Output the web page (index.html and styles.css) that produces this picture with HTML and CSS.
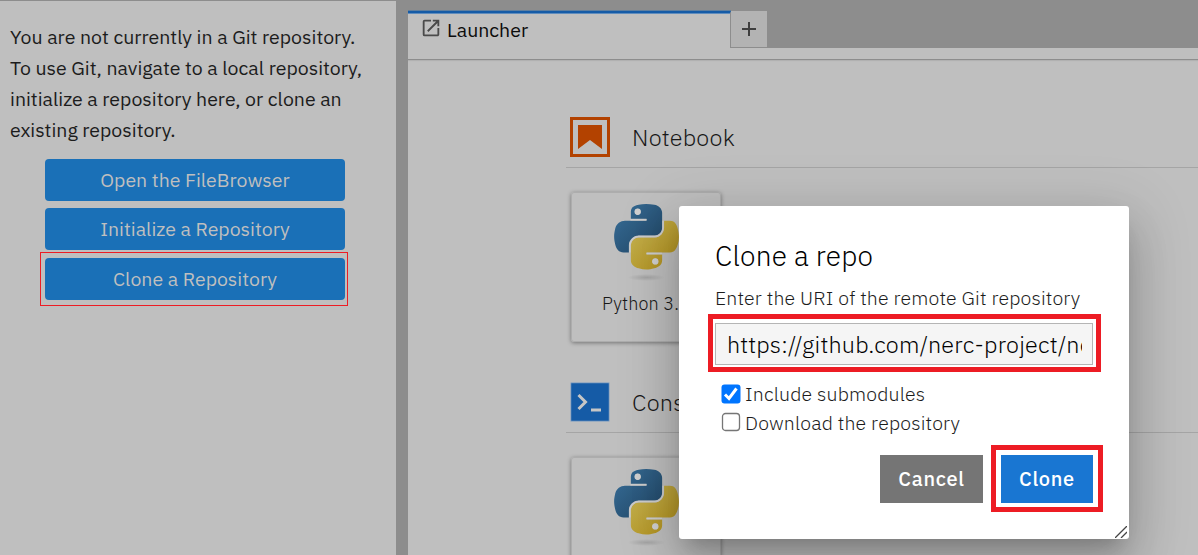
FILE: index.html
```html
<!DOCTYPE html>
<html lang="en">
<head>
<meta charset="utf-8">
<title>JupyterLab</title>
<link rel="stylesheet" href="styles.css">
</head>
<body>
<svg class="defs" width="0" height="0" aria-hidden="true">
  <defs>
    <linearGradient id="py-blue" x1="0" y1="0" x2="1" y2="1"><stop offset="0" stop-color="#386f9a"/><stop offset="1" stop-color="#204462"/></linearGradient>
    <linearGradient id="py-yellow" x1="0" y1="0" x2="1" y2="1"><stop offset="0" stop-color="#c6b556"/><stop offset="1" stop-color="#b08d17"/></linearGradient>
    <radialGradient id="py-shadow"><stop offset="0" stop-color="#000" stop-opacity=".14"/><stop offset="1" stop-color="#000" stop-opacity="0"/></radialGradient>
    <symbol id="python" viewBox="0 0 111 132">
      <ellipse cx="55" cy="126" rx="32" ry="6" fill="url(#py-shadow)"/>
      <path fill="url(#py-blue)" d="M54.9 0C50.300 0 46 .4 42.100 1.100 30.800 3.100 28.700 7.300 28.700 15v10.200h26.800v3.400H18.600c-7.800 0-14.600 4.700-16.700 13.600-2.500 10.200-2.600 16.600 0 27.200 1.900 7.900 6.500 13.600 14.200 13.600h9.200V70.800c0-8.800 7.700-16.700 16.800-16.700h26.800c7.400 0 13.400-6.100 13.400-13.600V15c0-7.300-6.100-12.700-13.400-13.900C64.300.3 59.500 0 54.900 0zM40.400 8.200c2.800 0 5 2.300 5 5.100 0 2.800-2.200 5.100-5 5.100-2.800 0-5-2.300-5-5.100 0-2.800 2.200-5.100 5-5.100z"/>
      <path fill="url(#py-yellow)" d="M85.600 28.700v11.900c0 9.200-7.800 17-16.800 17H42.100c-7.300 0-13.400 6.300-13.400 13.600v25.500c0 7.300 6.300 11.500 13.400 13.600 8.500 2.500 16.600 3 26.800 0 6.700-2 13.400-5.900 13.400-13.600V86.500H55.500v-3.400h40.200c7.800 0 10.700-5.400 13.400-13.600 2.800-8.400 2.700-16.500 0-27.200-1.900-7.800-5.600-13.600-13.400-13.600zM70.600 93.300c2.800 0 5 2.300 5 5.100 0 2.800-2.200 5.100-5 5.100-2.800 0-5-2.300-5-5.100 0-2.800 2.200-5.100 5-5.100z"/>
      <circle cx="40.400" cy="13.300" r="5.400" fill="#d0d0d0"/><circle cx="70.600" cy="98.400" r="5.400" fill="#d0d0d0"/>
      <path d="M28 27h27.500M55.500 84.800H82" stroke="#cdcdcd" stroke-width="2.600"/>
      <path fill="none" stroke="#cdcdcd" stroke-width="2.600" d="M84 28.700v11.900c0 8-6 15.300-15.200 15.300H42.100c-8 0-15.100 7-15.100 15.300V83"/>
    </symbol>
  </defs>
</svg>
<div class="app">
  <aside class="git-panel">
    <p class="warning"><span>You are not currently in a Git repository.</span><span>To use Git, navigate to a local repository,</span><span>initialize a repository here, or clone an</span><span>existing repository.</span></p>
    <button class="git-btn">Open the FileBrowser</button>
    <button class="git-btn">Initialize a Repository</button>
    <div class="outlined"><button class="git-btn">Clone a Repository</button></div>
  </aside>
  <main class="dock">
    <div class="tabbar">
      <div class="tab">
        <svg class="launch-icon" viewBox="0 0 24 24"><path fill="#4a4a4a" d="M19 19H5V5h7V3H5a2 2 0 0 0-2 2v14a2 2 0 0 0 2 2h14c1.100 0 2-.9 2-2v-7h-2v7zM14 3v2h3.590l-9.830 9.830 1.410 1.410L19 6.410V10h2V3h-7z"/></svg>
        <span class="tab-label">Launcher</span>
      </div>
      <div class="add"><svg width="14" height="14" viewBox="0 0 14 14"><path d="M7 0v14M0 7h14" stroke="#3f3f3f" stroke-width="2"/></svg></div>
    </div>
    <div class="toolbar"></div>
    <div class="launcher">
      <section>
        <header>
          <svg class="sec-icon" viewBox="0 0 40 40"><path fill="none" stroke="#b34200" stroke-width="3" d="M1.500 1.500h37v37h-37z"/><path fill="#b34200" d="M8 8h24v24l-12-9-12 9z"/></svg>
          <span class="sec-title">Notebook</span>
        </header>
        <div class="card"><svg class="python"><use href="#python"/></svg><span class="card-label">Python 3.</span></div>
      </section>
      <section class="clipped">
        <header>
          <svg class="sec-icon" viewBox="0 0 40 40"><path fill="#155ba6" stroke="#9fb2c8" stroke-width=".7" d="M.8.8h38.400v38.400H.8z"/><path fill="none" stroke="#c6c6c6" stroke-width="3" d="M8.500 13l7 7-7 7M21 28h10"/></svg>
          <span class="sec-title">Console</span>
        </header>
        <div class="card"><svg class="python"><use href="#python"/></svg></div>
      </section>
    </div>
  </main>
</div>
<div class="dialog">
  <h1>Clone a repo</h1>
  <label class="prompt">Enter the URI of the remote Git repository</label>
  <div class="mark mark-input"><div class="uri"><div class="uri-text">https://github.com/nerc-project/ne</div></div></div>
  <div class="check c1"><svg viewBox="0 0 20 20"><rect x=".5" y=".5" width="19" height="19" rx="3" fill="#0075ff"/><path d="M4 10.500l4 4 7.500-10" fill="none" stroke="#fff" stroke-width="3"/></svg><span>Include submodules</span></div>
  <div class="check c2"><svg viewBox="0 0 20 20"><rect x="1.500" y="1.500" width="17" height="17" rx="3" fill="#fff" stroke="#767676" stroke-width="1.300"/></svg><span>Download the repository</span></div>
  <div class="footer">
    <button class="btn cancel">Cancel</button>
    <div class="mark mark-btn"><button class="btn accept">Clone</button></div>
  </div>
  <svg class="grip" viewBox="0 0 12 12"><path d="M0 12L12 0M6 12l6-6" stroke="#444" stroke-width="1.300"/></svg>
</div>
</body>
</html>
```
FILE: styles.css
```css
* { box-sizing: border-box; }
body { margin: 0; width: 1198px; height: 555px; overflow: hidden; font-family: "IBM Plex Sans", Roboto, "Noto Sans", sans-serif; background: #8d8d8d; }
.defs { position: absolute; }
button { border: 0; font: inherit; padding: 0; }
.app { display: flex; height: 555px; padding-top: 1px; overflow: hidden; }
.git-panel { width: 396px; background: #bfbfbf; padding: 20px 0 0 10px; color: #1c1c1c; display: flex; flex-direction: column; }
.warning { margin: 0 0 14px; font-size: 19.5px; line-height: 31px; display: flex; flex-direction: column; align-items: flex-start; white-space: nowrap; }
.git-btn { display: block; width: 300px; height: 42px; margin: 0 0 7px 35px; border-radius: 4px; background: #1a70b7; color: #bfbfbf; font-size: 19.5px; line-height: 42px; flex: none; }
.outlined { width: 308px; height: 54px; margin: -5px 0 0 30px; border: 1px solid #ed1c24; padding: 5px 4px; }
.outlined .git-btn { margin: 0; }
.dock { flex: 1; margin-left: 12px; display: flex; flex-direction: column; min-width: 0; }
.tabbar { height: 47px; padding-top: 10px; display: flex; }
.tab { width: 323px; height: 37px; background: #bfbfbf; border-top: 2px solid #155ba6; border-right: 1px solid #8d8d8d; display: flex; align-items: center; padding: 0 0 3px 12px; box-shadow: inset 0 1px #5f8cbd, 0 -1px #5f7f9f; }
.launch-icon { width: 22px; height: 22px; margin: -3px 5px 0 0; }
.tab-label { font-size: 19.5px; color: #0c0c0c; }
.add { width: 36px; height: 36px; background: #b3b3b3; display: flex; align-items: center; justify-content: center; }
.toolbar { height: 12px; background: #bfbfbf; border-bottom: 1px solid #8d8d8d; flex: none; }
.launcher { height: 495px; background: #bfbfbf; padding: 47px 0 0 158px; box-shadow: inset 0 2px 1px -1px rgba(0,0,0,.08); overflow: hidden; }
section { height: 265px; }
.clipped { height: 183px; overflow: hidden; }
header { height: 61px; border-bottom: 1px solid #a5a5a5; display: flex; padding: 10px 0 0 4px; }
.sec-icon { width: 40px; height: 40px; margin-right: 22px; }
.sec-title { font-size: 23.4px; font-weight: 300; letter-spacing: .24px; line-height: 40px; color: #181818; }
.card { width: 150px; height: 150px; margin: 24px 0 0 5px; border: 1px solid #adadad; border-radius: 3px; box-shadow: 0 1px 4px rgba(0,0,0,.4); padding: 11px 0 0 42px; color: #181818; }
.python { width: 65px; height: 77px; display: block; }
.card-label { display: block; margin: 10px 0 0 -12px; font-size: 18px; font-weight: 300; letter-spacing: .16px; line-height: 25px; white-space: nowrap; }
.dialog { position: absolute; left: 679px; top: 206px; width: 450px; height: 333px; background: #fff; border-radius: 3px; padding: 29px 27px 0 30px; box-shadow: 0 14px 19px -9px rgba(0,0,0,.2), 0 30px 48px 4px rgba(0,0,0,.14), 0 11px 58px 10px rgba(0,0,0,.12); color: #1c1c1c; }
h1 { margin: 0 0 0 6px; font-size: 28px; font-weight: 300; letter-spacing: .2px; line-height: 41px; color: #000; white-space: nowrap; }
.prompt { display: block; margin: 8px 0 0 6px; font-size: 19.5px; font-weight: 300; letter-spacing: .16px; line-height: 27px; white-space: nowrap; }
.mark { border: 5px solid #ed1c24; }
.mark-input { width: 393px; height: 58px; margin: 3px 0 0 -1px; padding: 4px 3px 0 2px; }
.uri { width: 378px; height: 42px; border: 1px solid #b5b5b5; background: #f5f5f5; padding: 0 10px 0 11px; }
.uri-text { overflow: hidden; white-space: nowrap; font-size: 23.4px; font-weight: 300; letter-spacing: .2px; line-height: 40px; color: #000; }
.check { display: flex; align-items: center; height: 28px; margin-left: 12px; font-size: 19.5px; font-weight: 300; letter-spacing: .16px; white-space: nowrap; }
.c1 { margin-top: 8px; }
.c1 span { padding-bottom: 2px; }
.check svg { width: 20px; height: 20px; margin-right: 4px; }
.footer { display: flex; margin: 9px -1px 0 0; justify-content: flex-end; }
.btn { height: 48px; color: #fff; font-size: 20px; font-weight: 500; letter-spacing: .7px; display: block; padding-bottom: 2px; }
.cancel { width: 103px; margin: 10px 8px 0 0; background: #757575; }
.mark-btn { width: 112px; height: 67px; padding: 5px; }
.accept { width: 92px; background: #1976d2; }
.grip { position: absolute; right: 2px; bottom: 1px; width: 12px; height: 12px; }
```
